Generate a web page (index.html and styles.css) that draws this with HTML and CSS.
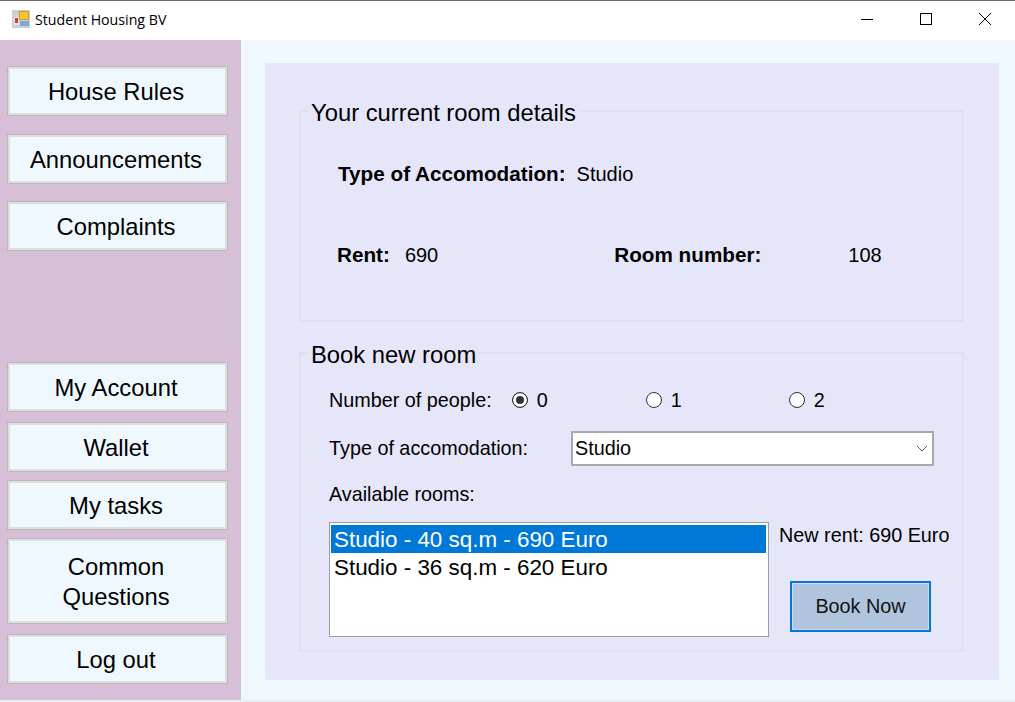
FILE: index.html
```html
<!DOCTYPE html>
<html lang="en">
<head>
	<meta charset="UTF-8">
	<title>Student Housing BV</title>
	<link rel="stylesheet" href="styles.css">
</head>
<body>
	<div class="titlebar">
		<svg class="appicon" width="18" height="18" viewBox="0 0 18 18">
			<rect x="0" y="0" width="18" height="18" fill="#cfcfcf"/>
			<rect x="2" y="7" width="5" height="8" fill="#e8e8e8"/>
			<rect x="3" y="8" width="3" height="5" fill="#d23c3c"/>
			<rect x="7.5" y="1.5" width="9" height="8" fill="#f7c531" stroke="#d69a1c"/>
			<rect x="8" y="11" width="9" height="5" fill="#7ba7e2"/>
		</svg>
		<span class="apptitle">Student Housing BV</span>
		<div class="winbtns">
			<svg width="14" height="14" viewBox="0 0 14 14"><path d="M1 7.5H13" stroke="#000" fill="none"/></svg>
			<svg width="14" height="14" viewBox="0 0 14 14"><rect x="1.5" y="1.5" width="11" height="11" stroke="#000" fill="none"/></svg>
			<svg width="14" height="14" viewBox="0 0 14 14"><path d="M1 1L13 13M13 1L1 13" stroke="#000" fill="none"/></svg>
		</div>
	</div>
	<div class="window">
		<div class="sidebar">
			<button class="navbtn b1">House Rules</button>
			<button class="navbtn b2">Announcements</button>
			<button class="navbtn b3">Complaints</button>
			<button class="navbtn b4">My Account</button>
			<button class="navbtn b5">Wallet</button>
			<button class="navbtn b6">My tasks</button>
			<button class="navbtn b7">Common<br>Questions</button>
			<button class="navbtn b8">Log out</button>
		</div>
		<div class="content">
			<div class="panel">
				<fieldset class="group details">
					<legend>Your current room details</legend>
					<div class="row acc">
						<span class="bold">Type of Accomodation:</span>
						<span class="accval">Studio</span>
					</div>
					<div class="row rentrow">
						<span class="bold">Rent:</span>
						<span class="rentval">690</span>
						<span class="bold roomlbl">Room number:</span>
						<span class="roomval">108</span>
					</div>
				</fieldset>
				<fieldset class="group book">
					<legend>Book new room</legend>
					<div class="row people">
						<span class="peoplelbl">Number of people:</span>
						<label class="radio r0"><i class="dot on"></i>0</label>
						<label class="radio r1"><i class="dot"></i>1</label>
						<label class="radio r2"><i class="dot"></i>2</label>
					</div>
					<div class="row typerow">
						<span class="typelbl">Type of accomodation:</span>
						<div class="combo">
							<span>Studio</span>
							<svg width="12" height="7" viewBox="0 0 12 7"><path d="M1 1L6 6L11 1" stroke="#606060" fill="none"/></svg>
						</div>
					</div>
					<div class="availlbl">Available rooms:</div>
					<div class="row bottomrow">
						<ul class="listbox">
							<li class="sel">Studio - 40 sq.m - 690 Euro</li>
							<li>Studio - 36 sq.m - 620 Euro</li>
						</ul>
						<div class="side">
							<div class="newrent">New rent: 690 Euro</div>
							<button class="booknow"><span>Book Now</span></button>
						</div>
					</div>
				</fieldset>
			</div>
		</div>
	</div>
</body>
</html>
```

FILE: styles.css
```css
*{box-sizing:border-box;}
html,body{margin:0;padding:0;height:100%;}
body{
	width:1015px;
	height:702px;
	overflow:hidden;
	background:#fff;
	color:#000;
	font-family:"Liberation Sans",Arial,sans-serif;
	font-size:19.8px;
}
.titlebar{
	height:40px;
	display:flex;
	align-items:center;
	background:#fff;
	border-top:1px solid #6b6b6b;
	padding-left:12px;
}
.appicon{margin-top:-3px;}
.apptitle{
	font-family:"Open Sans",sans-serif;
	font-size:14.2px;
	margin-left:5px;
	margin-top:-3px;
}
.winbtns{
	margin-left:auto;
	display:flex;
	gap:45px;
	padding-right:23px;
	margin-top:-3px;
}
.window{
	display:flex;
	height:662px;
	background:#f0f8ff;
	border-bottom:2px solid #e9eef2;
}
.sidebar{
	width:241px;
	background:#d8bfd8;
	padding:26px 0 0 7px;
	display:flex;
	flex-direction:column;
	align-items:flex-start;
}
.navbtn{
	width:221px;
	height:50px;
	padding:1px 3px 0 0;
	background:#f0f8ff;
	border:1px solid #b8b8b8;
	box-shadow:inset 0 0 0 2px #dedede;
	font-family:"Liberation Sans",Arial,sans-serif;
	font-size:23.8px;
	line-height:30px;
	color:#000;
}
.b2{margin-top:18px;}
.b3{margin-top:17px;}
.b4{margin-top:111px;}
.b5{margin-top:10px;}
.b6{margin-top:8px;}
.b7{margin-top:8px;height:86px;}
.b8{margin-top:10px;}
.content{flex:1;padding:23px 16px 20px 24px;}
.panel{
	height:617px;
	background:#e6e6fa;
	padding:32px 35px 0 34px;
}
.group{
	margin:0;
	padding:0;
	min-width:0;
	border:2px solid #e0e0ec;
}
.group legend{
	margin-left:8px;
	padding:4px 2px 0 2px;
	font-size:23.8px;
	line-height:28px;
}
.details{height:227px;font-size:20px;}
.book{height:315px;margin-top:15px;}
.row{display:flex;align-items:center;}
.bold{font-weight:bold;font-size:20.7px;}
.acc{padding:35px 0 0 37px;line-height:24px;}
.accval{margin-left:11px;}
.rentrow{padding:57px 0 0 36px;line-height:24px;}
.rentval{margin-left:15px;}
.roomlbl{margin-left:176px;}
.roomval{margin-left:87px;}
.people{padding:19px 0 0 28px;line-height:24px;}
.radio{display:flex;align-items:center;}
.dot{
	display:block;
	width:16px;
	height:16px;
	margin-right:9px;
	border:1px solid #333;
	border-radius:50%;
	background:#fff;
}
.dot.on{
	background:#333;
	box-shadow:inset 0 0 0 3px #fff;
}
.r0{margin-left:20px;}
.r1{margin-left:98px;}
.r2{margin-left:107px;}
.typerow{padding:19px 0 0 28px;}
.typelbl{width:242px;}
.combo{
	width:363px;
	height:35px;
	display:flex;
	align-items:center;
	justify-content:space-between;
	padding:0 4px 0 2px;
	background:#fff;
	border:2px solid #a8a8a8;
}
.availlbl{padding:16px 0 0 28px;line-height:24px;}
.bottomrow{padding:16px 0 0 28px;align-items:flex-start;}
.listbox{
	list-style:none;
	margin:0;
	padding:2px 2px 2px 1px;
	width:440px;
	height:115px;
	background:#fff;
	border:1px solid #9c9ca4;
	font-size:22.4px;
	line-height:29px;
}
.listbox li{padding-left:3px;height:28px;}
.listbox .sel{background:#0078d7;color:#fff;}
.side{margin-left:10px;}
.newrent{line-height:24px;margin-top:1px;}
.booknow{
	display:block;
	width:141px;
	height:51px;
	margin:34px 0 0 11px;
	padding:0;
	background:#b0c4de;
	border:2px solid #0078d7;
	box-shadow:inset 0 0 0 1px #d0dcec;
	font-family:"Liberation Sans",Arial,sans-serif;
	font-size:19.8px;
	color:#111;
}
```
